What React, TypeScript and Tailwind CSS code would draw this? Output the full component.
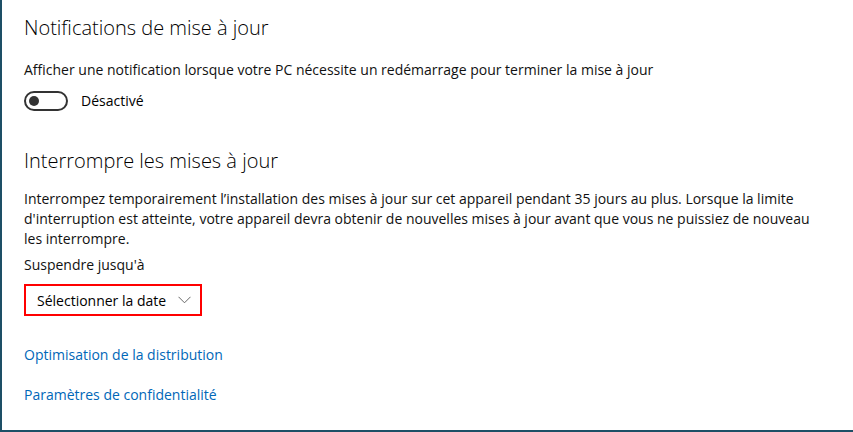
import React from "react";

const font = { fontFamily: '"Open Sans", "Noto Sans", sans-serif' };

const Toggle = ({ on, label }: { on: boolean; label: string }) => (
  <div className="flex items-center gap-[13px]">
    <div className="w-[44px] h-[20px] rounded-full border-2 border-[#333] flex items-center px-[3px]">
      <div className="w-[10px] h-[10px] rounded-full bg-[#333]" />
    </div>
    <span className="text-[14px] text-black">{label}</span>
  </div>
);

const SectionTitle = ({ children }: any) => (
  <div className="text-[20px] font-light text-black leading-[26px]">{children}</div>
);

export default function App() {
  return (
    <div style={font} className="w-[853px] h-[432px] bg-white border-l-2 border-b-2 border-[#1d4f66] overflow-hidden">
      <div className="pl-[22px] pt-[15px] flex flex-col">
        <SectionTitle>Notifications de mise à jour</SectionTitle>
        <div className="mt-[19px] text-[14px] leading-[20px] text-[#111]">
          Afficher une notification lorsque votre PC nécessite un redémarrage pour terminer la mise à jour
        </div>
        <div className="mt-[10px]">
          <Toggle on={false} label="Désactivé" />
        </div>

        <div className="mt-[37px]">
          <SectionTitle>Interrompre les mises à jour</SectionTitle>
        </div>
        <div className="mt-[15px] text-[14px] leading-[20px] text-[#111]">
          <div className="whitespace-nowrap">Interrompez temporairement l’installation des mises à jour sur cet appareil pendant 35 jours au plus. Lorsque la limite</div>
          <div className="whitespace-nowrap">d'interruption est atteinte, votre appareil devra obtenir de nouvelles mises à jour avant que vous ne puissiez de nouveau</div>
          <div className="whitespace-nowrap">les interrompre.</div>
        </div>
        <div className="mt-[6px] text-[14px] leading-[20px] text-[#111]">Suspendre jusqu'à</div>
        <div className="mt-[9px]">
          <button className="w-[178px] h-[32px] border-2 border-[#ff0000] flex items-center justify-between pl-[11px] pr-[9px] text-[14px] text-black">
            <span>Sélectionner la date</span>
            <svg width="13" height="8" viewBox="0 0 13 8" fill="none">
              <path d="M0.5 0.8 L6.5 6.8 L12.5 0.8" stroke="#666" strokeWidth="1" />
            </svg>
          </button>
        </div>

        <a className="mt-[29px] text-[14px] leading-[20px] text-[#0067b8]">Optimisation de la distribution</a>
        <a className="mt-[20px] text-[14px] leading-[20px] text-[#0067b8]">Paramètres de confidentialité</a>
      </div>
    </div>
  );
}
